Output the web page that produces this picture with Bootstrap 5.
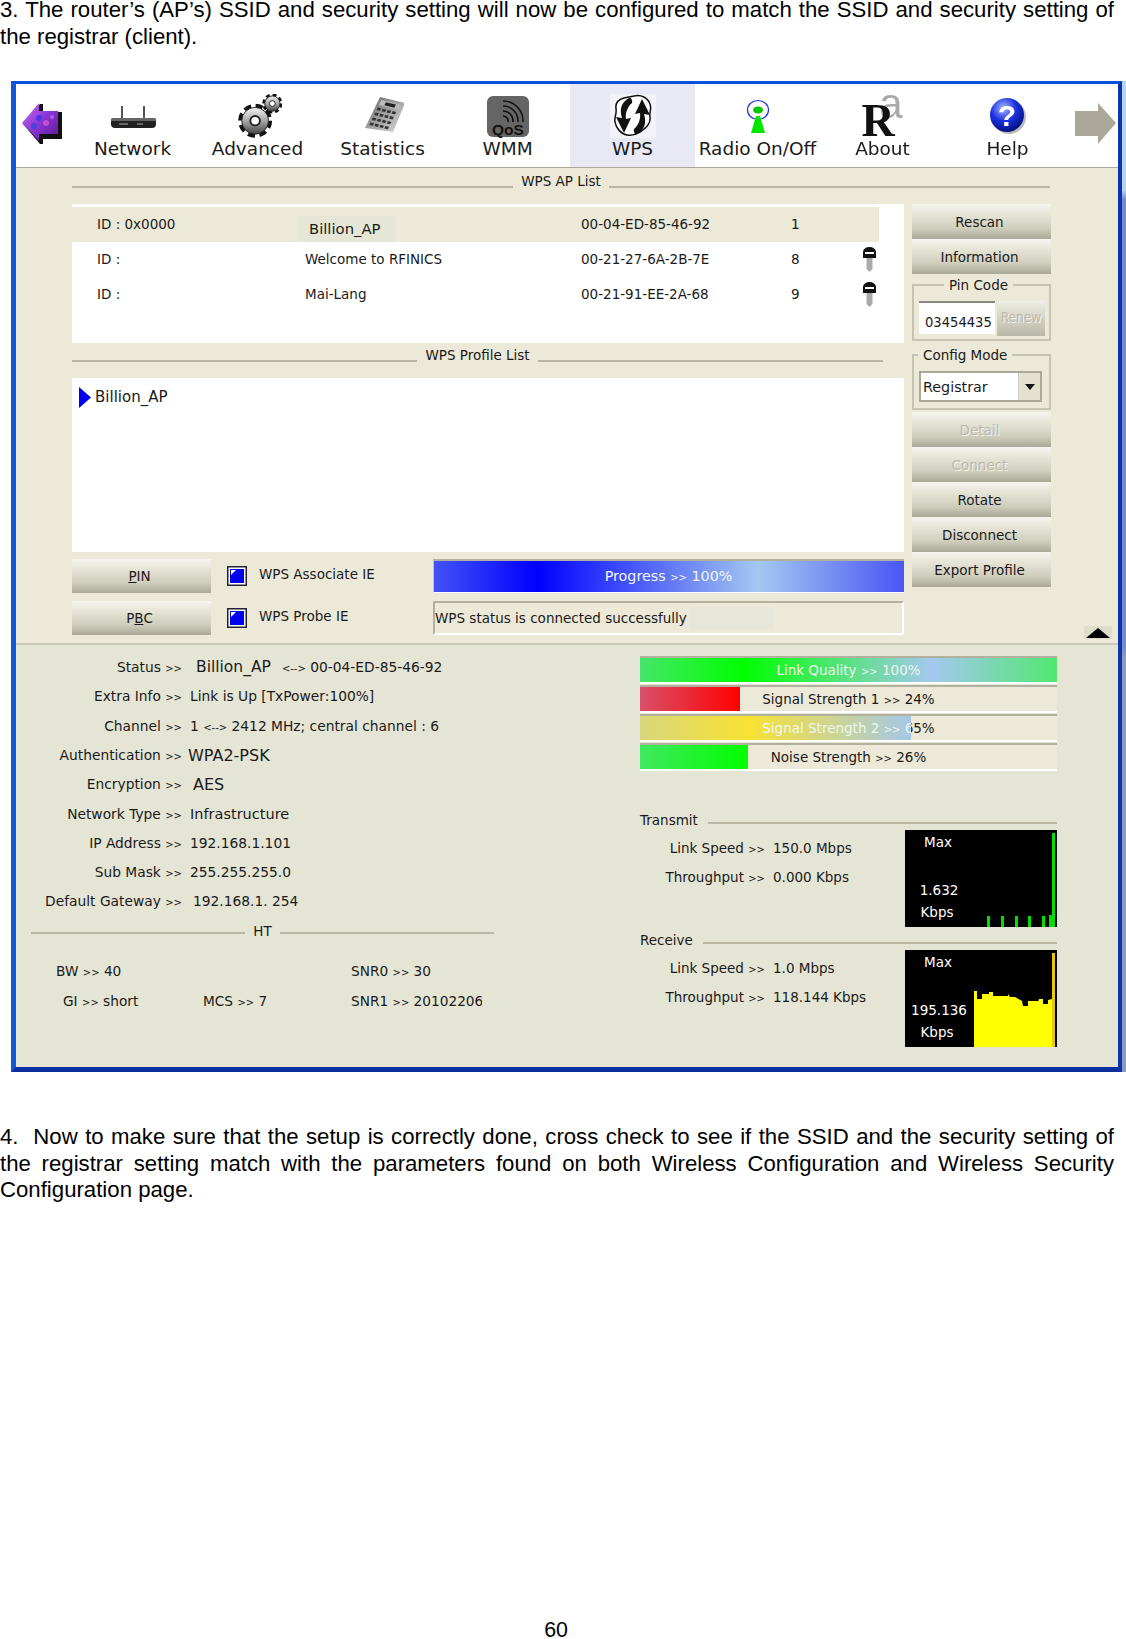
<!DOCTYPE html>
<html lang="en">
<head>
  <meta charset="UTF-8" />
  <meta name="viewport" content="width=device-width, initial-scale=1.0" />
  <title>WPS manual page 60</title>
  <link rel="stylesheet" href="https://cdn.jsdelivr.net/npm/bootstrap@5.3.3/dist/css/bootstrap.min.css">
  <style>
    body {
      height: 1639px;
      overflow: hidden;
      background: #fff;
      color: #111;
      font-family: "Liberation Sans", Arial, sans-serif;
    }
    .doc-text {
      width: 1114px;
      margin: 0;
      font-size: 22.2px;
      line-height: 26.6px;
      text-align: justify;
      color: #000;
    }
    .doc-top { margin-top: -3px; }
    .shot-wrap { margin: 31px 0 52px 11px; }
    .shot-strip {
      width: 4px;
      background: linear-gradient(to bottom, #bcd0f0 0, #bcd0f0 11%, #7888c8 12%, #7888c8 57%, #8f9ab5 58%, #8f9ab5 100%);
    }
    .shot {
      width: 1111px;
      border-style: solid;
      border-color: #0a50d8 #0a35b0 #0a30a0 #1058d8;
      border-width: 3px 4px 5px 5px;
      font: 13.5px/20px "DejaVu Sans", sans-serif;
      color: #1a1a1a;
      filter: blur(.35px);
    }
    .tb { height: 84px; background: #fff; border-bottom: 1px solid #aca899; }
    .tb-back { width: 54px; padding: 19px 0 0 6px; }
    .tb-next { width: 47px; padding: 19px 0 0 5px; }
    .tb-item { width: 125px; padding-top: 10px; text-align: center; font-size: 18.5px; }
    .tb-item svg { display: block; height: 44px; margin: 0 auto 1px; }
    .tb-item svg.ico-about { height: 64px; margin-top: -12px; margin-bottom: -7px; overflow: visible; }
    .tb-on { background: #e9e9f5; }

    .wps { background: #ece9d8; padding-left: 56px; padding-bottom: 8px; border-bottom: 2px solid #c9c7b6; }
    .sec-head { height: 36px; padding-top: 3px; width: 978px; }
    .sec-head2 { height: 35px; padding-top: 2px; }
    .sec-line { flex: 1; height: 2px; margin-top: 15px; background: #b9b6a3; }
    .sec-name { padding: 0 8px; white-space: nowrap; }
    .line-short { margin-right: 21px; }
    .wps-main { width: 832px; }
    .wps-side { width: 139px; margin-left: 8px; }
    .wps-corner { width: 67px; padding-left: 33px; }
    .wps-corner svg { margin-bottom: -4px; }
    .ap-box { height: 139px; background: #fff; padding-top: 3px; }
    table.ap-tbl { width: 807px; table-layout: fixed; margin: 0; --bs-table-bg: transparent; }
    table.ap-tbl td { height: 35px; padding: 0 0 2px; vertical-align: middle; color: #1a1a1a; background: transparent; }
    table.ap-tbl tr.ap-sel td { background: #ece9d8; }
    table.ap-tbl td:first-child { padding-left: 25px; }
    table.ap-tbl td.key-cell, table.ap-tbl td.ssid-cell { padding-bottom: 0; vertical-align: top; }
    .ssid-on { display: block; width: 97px; height: 26px; margin: 9px 0 0 -7px; padding: 3px 0 0 11px; background: #e6e6d6; font-size: 14.8px; white-space: nowrap; }
    .key-ico { display: block; margin-top: 5px; }
    .prof-box { height: 174px; background: #fff; padding: 9px 0 0 7px; font-size: 15px; }
    .wps-row { height: 34px; margin-top: 7px; }
    .wps-row + .wps-row { margin-top: 8px; }
    .flag { width: 222px; padding-left: 16px; }
    .flag span { padding: 0 0 4px 12px; }

    .xp-btn {
      --bs-btn-padding-x: 0;
      --bs-btn-padding-y: 0;
      --bs-btn-font-size: 13.5px;
      --bs-btn-line-height: 1;
      --bs-btn-color: #1a1a1a;
      --bs-btn-hover-color: #1a1a1a;
      --bs-btn-border-width: 0;
      --bs-btn-border-radius: 0;
      display: block;
      width: 139px;
      height: 35px;
      padding: 2px 4px 0 0;
      font-family: "DejaVu Sans", sans-serif;
      background: linear-gradient(to bottom, #f6f5ee 0, #e6e4d6 30%, #cfcdbc 70%, #a9a795 100%);
    }
    .xp-btn.off, .renew-btn { color: #b9b8aa; text-shadow: 1px 1px 0 #f4f3ea; opacity: 1; }
    .btn-h34 { height: 34px; }

    .grp { position: relative; border: 2px solid #c5c3b1; }
    .grp-title { position: absolute; top: -11px; background: #ece9d8; padding: 0 5px; white-space: nowrap; }
    .grp-pin { height: 57px; margin-top: 10px; padding: 15px 3px 0 5px; }
    .grp-cfg { height: 56px; margin-top: 13px; margin-bottom: 2px; padding: 15px 7px 0 5px; }
    .pin-title { left: 30px; }
    .cfg-title { left: 4px; }
    .pin-in {
      width: 76px;
      height: 33px;
      padding: 9px 0 0 6px;
      background: #fff;
      border-top: 2px solid #8b8a7c;
      font-family: "DejaVu Sans Condensed", "DejaVu Sans", sans-serif;
      font-size: 14.6px;
    }
    .renew-btn {
      width: 48px;
      height: 35px;
      margin-left: 2px;
      padding-top: 6px;
      text-align: center;
      font-family: "DejaVu Sans Condensed", "DejaVu Sans", sans-serif;
      background: linear-gradient(to bottom, #efeee4, #b9b7a6);
    }
    .cfg-sel {
      height: 31px;
      padding-left: 2px;
      background: #fff;
      border: 2px solid #aca899;
    }
    .cfg-sel span { padding-top: 4px; font-size: 14.3px; }
    .cfg-arrow { width: 22px; background: #e4e1d0; border-left: 1px solid #ccc; }

    .bar-prog { height: 34px; border-radius: 0; background: #ece9d8; border-top: 2px solid #b3b09e; border-bottom: 1px solid #fff; border-left: 1px solid #c5c3b1; font-size: 14.3px; }
    .bar-stat {
      height: 34px;
      border-top: 2px solid #b3b09e;
      border-left: 2px solid #b3b09e;
      border-bottom: 2px solid #fff;
      border-right: 2px solid #fff;
      white-space: nowrap;
    }
    .stat-patch { width: 84px; height: 22px; margin-left: 2px; background: #e6e6d9; }

    .m-bar { position: relative; height: 28px; border-radius: 0; background: #ece9d8; border-top: 2px solid #b3b09e; border-bottom: 2px solid #fff; font-size: 13.5px; }
    .m-bar + .m-bar { margin-top: 1px; }
    .m-txt { position: absolute; inset: 0; text-align: center; line-height: 24px; color: #1a1a1a; }
    .m-fill { position: relative; overflow: hidden; display: block; height: 100%; }
    .m-fill .m-txt { color: #eef6ee; width: var(--bar-w); right: auto; }
    .m-bar { --bar-w: 417px; }
    .bar-prog { --bar-w: 469px; }
    .bar-prog .m-txt { line-height: 30px; }
    .fill-blue { background: linear-gradient(to right, #4352f6 0, #0000ff 22%, #a4c8f0 69%, #4a55f5 100%); }
    .fill-lq { background: linear-gradient(to right, #46e56a 0, #00ff00 25%, #a4c8f0 70%, #50e870 100%); }
    .fill-red { background: linear-gradient(to right, #d8506a 0, #ff0000 100%); }
    .fill-yel { background: linear-gradient(to right, #d8d67c 0, #f9e233 40%, #a4c8e8 100%); }
    .fill-grn { background: linear-gradient(to right, #40e860 0, #00ff00 100%); }

    .stat { background: #e5e5d5; height: 422px; padding-top: 8px; }
    .st-left { width: 624px; }
    .st-row { height: 29.27px; line-height: 29px; white-space: nowrap; }
    .st-lab { width: 166px; text-align: right; font-size: 13.8px; }
    .st-val { margin-left: 8px; font-size: 13.8px; }
    .gg { font-size: 10px; }
    .off-6 { margin-left: 14px; }
    .off-3 { margin-left: 11px; }
    .off-m { margin-left: 6px; }
    .val-big { font-size: 16px; }
    .val-wide { font-size: 14.5px; }
    .val-ssid { font-size: 15.5px; padding-right: 11px; }
    .ht-head { width: 463px; margin: 4px 0 16px 15px; }
    .ht-head .sec-line { margin-top: 11px; }
    .ht-grid { display: grid; grid-template-columns: 172px 148px 131px; margin-left: 15px; white-space: nowrap; line-height: 29px; font-size: 13.7px; }
    .ht-bw { padding-left: 25px; }
    .ht-gi { padding-left: 32px; }
    .ht-clip { overflow: hidden; }
    .st-right { width: 417px; padding-top: 3px; }
    .rate-head { height: 20px; }
    .rate-head .sec-line { margin-top: 12px; margin-left: 10px; }
    .rate-first { margin-top: 39px; }
    .rate-next { margin-top: 3px; }
    .rate-txt { width: 265px; padding-top: 4px; }
    .rate-lab { width: 125px; text-align: right; }
    .rate-row { height: 29px; line-height: 29px; white-space: nowrap; }
    .graph { display: block; width: 152px; height: 97px; }
    .graph text { font: 13.5px "DejaVu Sans", sans-serif; fill: #fff; text-anchor: middle; }
    .page-no { font-size: 21.33px; line-height: 18px; text-align: center; width: 1112px; margin-top: auto; color: #000; }
  </style>
</head>
<body class="d-flex flex-column">

  <p class="doc-text doc-top">3. The router’s (AP’s) SSID and security setting will now be configured to match the SSID and security setting of the registrar (client).</p>

  <div class="shot-wrap d-flex">
    <div class="shot">

      <div class="tb d-flex">
        <div class="tb-back">
          <svg width="40" height="41" viewBox="0 0 40 41">
            <defs><linearGradient id="pur" x1="0" y1="0" x2="1" y2="1"><stop offset="0" stop-color="#d070f0"/><stop offset=".5" stop-color="#8a35d8"/><stop offset="1" stop-color="#5a1a90"/></linearGradient></defs>
            <polygon points="1,21 18,1 21,1 21,9 40,9 40,36 21,36 21,41 18,41" fill="#111"/>
            <polygon points="0,20 17,0 17,8 36,8 36,31 17,31 17,38" fill="url(#pur)"/>
            <circle cx="17" cy="15" r="3" fill="#4a3ae0"/><circle cx="24" cy="20" r="3" fill="#c050d0"/><circle cx="12" cy="23" r="3" fill="#5040d8"/><circle cx="30" cy="14" r="2" fill="#b060e8"/>
          </svg>
        </div>
        <div class="tb-item">
          <svg width="50" viewBox="0 0 50 44">
            <path d="M14 12v13M36 12v13" stroke="#555" stroke-width="2"/>
            <rect x="3" y="24" width="45" height="10" rx="4" fill="#222"/>
            <rect x="3" y="24" width="45" height="3" rx="1.5" fill="#666"/>
            <path d="M11 30h9M29 30h6" stroke="#aaa" stroke-width="1.2"/>
          </svg>
          Network
        </div>
        <div class="tb-item">
          <svg width="48" viewBox="-3 0 48 46">
            <defs><linearGradient id="steel" x1="0" y1="0" x2="0" y2="1"><stop offset="0" stop-color="#f2f2f2"/><stop offset=".5" stop-color="#a8a8a8"/><stop offset="1" stop-color="#444"/></linearGradient></defs>
            <circle cx="36" cy="10" r="8" fill="none" stroke="#111" stroke-width="5" stroke-dasharray="3.6 2.68"/>
            <circle cx="36" cy="10" r="8" fill="url(#steel)" stroke="#222" stroke-width="1"/>
            <circle cx="36" cy="10" r="3" fill="#fff" stroke="#222"/>
            <circle cx="18" cy="28" r="14.5" fill="none" stroke="#111" stroke-width="6.5" stroke-dasharray="7 4.39"/>
            <circle cx="18" cy="28" r="14" fill="url(#steel)" stroke="#222" stroke-width="1"/>
            <circle cx="18" cy="28" r="5" fill="#fff" stroke="#222" stroke-width="2"/>
          </svg>
          Advanced
        </div>
        <div class="tb-item">
          <svg width="42" viewBox="-3 0 42 44">
            <defs><linearGradient id="calc" x1="0" y1="0" x2="1" y2="1"><stop offset="0" stop-color="#666"/><stop offset="1" stop-color="#ddd"/></linearGradient></defs>
            <polygon points="15,3 40,9 28,38 0,34" fill="url(#calc)"/>
            <g transform="matrix(2.5 .6 -1.5 3.1 15 3)" fill="#333">
              <rect x="1" y=".8" width="8" height="1.6" fill="#bbb"/>
              <rect x="3" y="1.1" width="4" height="1" fill="#222"/>
              <rect x="1" y="3.2" width="1.4" height=".8"/><rect x="3" y="3.2" width="1.4" height=".8"/><rect x="5" y="3.2" width="1.4" height=".8"/><rect x="7" y="3.2" width="1.4" height=".8"/>
              <rect x="1" y="4.8" width="1.4" height=".8"/><rect x="3" y="4.8" width="1.4" height=".8"/><rect x="5" y="4.8" width="1.4" height=".8"/><rect x="7" y="4.8" width="1.4" height=".8"/>
              <rect x="1" y="6.4" width="1.4" height=".8"/><rect x="3" y="6.4" width="1.4" height=".8"/><rect x="5" y="6.4" width="1.4" height=".8"/><rect x="7" y="6.4" width="1.4" height=".8"/>
              <rect x="1" y="8" width="1.4" height=".8"/><rect x="3" y="8" width="1.4" height=".8"/><rect x="5" y="8" width="1.4" height=".8"/><rect x="7" y="8" width="1.4" height=".8"/>
            </g>
          </svg>
          Statistics
        </div>
        <div class="tb-item">
          <svg width="42" viewBox="0 0 42 44">
            <rect x="0" y="2" width="42" height="41" rx="6" fill="#656565"/>
            <g fill="none" stroke="#111" stroke-width="1.6">
              <path d="M16 22a5 5 0 0 1 5 6"/><path d="M16 17a10 10 0 0 1 10 11"/><path d="M16 12a15 15 0 0 1 15 16"/><path d="M16 7a20 20 0 0 1 20 21"/>
            </g>
            <text x="21" y="41" text-anchor="middle" font-family="Liberation Sans, sans-serif" font-weight="700" font-size="15.5" fill="#111">QoS</text>
          </svg>
          WMM
        </div>
        <div class="tb-item tb-on">
          <svg width="46" viewBox="0 0 46 44">
            <rect x="0" y="0" width="46" height="44" fill="#f2f2f8"/>
            <path d="M24 2c7-2 14 2 16 8 2 5-1 8 0 13 1 7-5 12-10 15-5 3-8 4-13 3-6-1-11-7-12-13-1-5 2-8 1-13C5 8 10 5 14 4c4-1 6-1 10-2z" fill="#fff" stroke="#111" stroke-width="1.5"/>
            <path d="M19 4C12 8 9 14 12 24l-6-1 8 16 7-15-5 1c-1-6 2-13 6-16 1-2-1-6-3-5z" fill="#111"/>
            <path d="M27 40c7-4 10-10 7-20l6 1-8-16-7 15 5-1c1 6-2 13-6 16-1 2 1 6 3 5z" fill="#111"/>
          </svg>
          WPS
        </div>
        <div class="tb-item">
          <svg width="24" viewBox="0 0 24 44">
            <ellipse cx="12" cy="16" rx="10.5" ry="9.5" fill="#fff" stroke="#2030e0" stroke-width="1.2"/>
            <ellipse cx="12" cy="16" rx="5" ry="3.5" fill="#00c800"/>
            <polygon points="10,22 14,22 19,39 5,39" fill="#00e800"/>
          </svg>
          Radio On/Off
        </div>
        <div class="tb-item">
          <svg class="ico-about" width="44" viewBox="0 -12 44 64">
            <text x="30" y="24" text-anchor="middle" font-family="Liberation Sans, sans-serif" font-size="42" fill="#aaa">a</text>
            <text x="17" y="42" text-anchor="middle" font-family="Liberation Serif, serif" font-weight="700" font-size="46" fill="#111">R</text>
          </svg>
          About
        </div>
        <div class="tb-item">
          <svg width="38" viewBox="0 0 38 44">
            <defs><radialGradient id="orb" cx=".4" cy=".3" r=".75"><stop offset="0" stop-color="#a8b8ff"/><stop offset=".5" stop-color="#1a30e0"/><stop offset="1" stop-color="#001070"/></radialGradient></defs>
            <circle cx="20" cy="23" r="17" fill="#bbb"/>
            <circle cx="18" cy="21" r="17" fill="url(#orb)"/>
            <text x="18" y="32" text-anchor="middle" font-family="Liberation Sans, sans-serif" font-weight="700" font-size="30" fill="#fff">?</text>
          </svg>
          Help
        </div>
        <div class="tb-next">
          <svg width="41" height="41" viewBox="0 0 41 41"><polygon points="0,8 23,8 23,0 41,20 23,41 23,33 0,33" fill="#aca899"/></svg>
        </div>
      </div>

      <div class="wps">
        <div class="sec-head d-flex">
          <div class="sec-line"></div><div class="sec-name">WPS AP List</div><div class="sec-line"></div>
        </div>
        <div class="d-flex">
          <div class="wps-main">
            <div class="ap-box">
              <table class="table table-borderless ap-tbl">
                <colgroup><col width="233"><col width="276"><col width="210"><col width="71"><col width="17"></colgroup>
                <tr class="ap-sel"><td>ID : 0x0000</td><td class="ssid-cell"><span class="ssid-on">Billion_AP</span></td><td>00-04-ED-85-46-92</td><td>1</td><td></td></tr>
                <tr><td>ID :</td><td>Welcome to RFINICS</td><td>00-21-27-6A-2B-7E</td><td>8</td><td class="key-cell">
                  <svg class="key-ico" width="15" height="25" viewBox="0 0 15 25"><path d="M4.5 11h6v11l-3 3-3-3z" fill="#aaa"/><path d="M1 11V5a6.5 5 0 0 1 13 0v6z" fill="#111"/><rect x="3" y="5" width="9" height="2" fill="#fff"/></svg>
                </td></tr>
                <tr><td>ID :</td><td>Mai-Lang</td><td>00-21-91-EE-2A-68</td><td>9</td><td class="key-cell">
                  <svg class="key-ico" width="15" height="25" viewBox="0 0 15 25"><path d="M4.5 11h6v11l-3 3-3-3z" fill="#aaa"/><path d="M1 11V5a6.5 5 0 0 1 13 0v6z" fill="#111"/><rect x="3" y="5" width="9" height="2" fill="#fff"/></svg>
                </td></tr>
              </table>
            </div>
            <div class="sec-head2 d-flex">
              <div class="sec-line"></div><div class="sec-name">WPS Profile List</div><div class="sec-line line-short"></div>
            </div>
            <div class="prof-box d-flex align-items-center">
              <svg class="mb-auto" width="12" height="21" viewBox="0 0 12 21"><polygon points="0,0 12,10.5 0,21" fill="#0000f0"/></svg>
              <span class="mb-auto ms-1">Billion_AP</span>
            </div>
            <div class="wps-row d-flex">
              <button class="btn xp-btn btn-h34" type="button"><u>P</u>IN</button>
              <div class="flag d-flex align-items-center">
                <svg width="20" height="20" viewBox="0 0 20 20"><rect x=".75" y=".75" width="18.5" height="18.5" fill="#fff" stroke="#223" stroke-width="1.5"/><rect x="3" y="3" width="14" height="14" fill="#0000f0"/><path d="M4 9V4h5z" fill="#fff"/></svg>
                <span>WPS Associate IE</span>
              </div>
              <div class="progress bar-prog flex-grow-1 position-relative">
                <div class="m-txt">Progress <span class="gg">&gt;&gt;</span> 100%</div>
                <div class="progress-bar m-fill fill-blue" style="width:100%"><div class="m-txt">Progress <span class="gg">&gt;&gt;</span> 100%</div></div>
              </div>
            </div>
            <div class="wps-row d-flex">
              <button class="btn xp-btn btn-h34" type="button">P<u>B</u>C</button>
              <div class="flag d-flex align-items-center">
                <svg width="20" height="20" viewBox="0 0 20 20"><rect x=".75" y=".75" width="18.5" height="18.5" fill="#fff" stroke="#223" stroke-width="1.5"/><rect x="3" y="3" width="14" height="14" fill="#0000f0"/><path d="M4 9V4h5z" fill="#fff"/></svg>
                <span>WPS Probe IE</span>
              </div>
              <div class="bar-stat flex-grow-1 d-flex align-items-center">WPS status is connected successfully<div class="stat-patch"></div></div>
            </div>
          </div>

          <div class="wps-side">
            <button class="btn xp-btn mt-0" type="button">Rescan</button>
            <button class="btn xp-btn" type="button">Information</button>
            <div class="grp grp-pin d-flex">
              <div class="grp-title pin-title">Pin Code</div>
              <div class="pin-in">03454435</div>
              <div class="renew-btn">Renew</div>
            </div>
            <div class="grp grp-cfg">
              <div class="grp-title cfg-title">Config Mode</div>
              <div class="cfg-sel d-flex justify-content-between">
                <span>Registrar</span>
                <div class="cfg-arrow d-flex align-items-center justify-content-center">
                  <svg width="10" height="6" viewBox="0 0 10 6"><polygon points="0,0 10,0 5,6" fill="#111"/></svg>
                </div>
              </div>
            </div>
            <button class="btn xp-btn off" type="button">Detail</button>
            <button class="btn xp-btn off" type="button">Connect</button>
            <button class="btn xp-btn" type="button">Rotate</button>
            <button class="btn xp-btn" type="button">Disconnect</button>
            <button class="btn xp-btn" type="button">Export Profile</button>
          </div>

          <div class="wps-corner d-flex align-items-end">
            <svg width="28" height="13" viewBox="0 0 28 13"><rect width="28" height="13" fill="#dedccb"/><polygon points="2,12 14,2 26,12" fill="#000"/></svg>
          </div>
        </div>
      </div>

      <div class="stat d-flex">
        <div class="st-left">
          <div class="st-row d-flex"><span class="st-lab">Status <span class="gg">&gt;&gt;</span></span><span class="st-val off-6"><span class="val-ssid">Billion_AP</span><span class="gg">&lt;--&gt;</span> 00-04-ED-85-46-92</span></div>
          <div class="st-row d-flex"><span class="st-lab">Extra Info <span class="gg">&gt;&gt;</span></span><span class="st-val">Link is Up [TxPower:100%]</span></div>
          <div class="st-row d-flex"><span class="st-lab">Channel <span class="gg">&gt;&gt;</span></span><span class="st-val">1 <span class="gg">&lt;--&gt;</span> 2412 MHz; central channel : 6</span></div>
          <div class="st-row d-flex"><span class="st-lab">Authentication <span class="gg">&gt;&gt;</span></span><span class="st-val off-m val-big">WPA2-PSK</span></div>
          <div class="st-row d-flex"><span class="st-lab">Encryption <span class="gg">&gt;&gt;</span></span><span class="st-val off-3 val-big">AES</span></div>
          <div class="st-row d-flex"><span class="st-lab">Network Type <span class="gg">&gt;&gt;</span></span><span class="st-val val-wide">Infrastructure</span></div>
          <div class="st-row d-flex"><span class="st-lab">IP Address <span class="gg">&gt;&gt;</span></span><span class="st-val">192.168.1.101</span></div>
          <div class="st-row d-flex"><span class="st-lab">Sub Mask <span class="gg">&gt;&gt;</span></span><span class="st-val">255.255.255.0</span></div>
          <div class="st-row d-flex"><span class="st-lab">Default Gateway <span class="gg">&gt;&gt;</span></span><span class="st-val off-3">192.168.1. 254</span></div>
          <div class="ht-head d-flex">
            <div class="sec-line"></div><div class="sec-name">HT</div><div class="sec-line"></div>
          </div>
          <div class="ht-grid">
            <div class="ht-bw">BW <span class="gg">&gt;&gt;</span> 40</div><div></div><div class="ht-clip">SNR0 <span class="gg">&gt;&gt;</span> 30</div>
            <div class="ht-gi">GI <span class="gg">&gt;&gt;</span> short</div><div>MCS <span class="gg">&gt;&gt;</span> 7</div><div class="ht-clip">SNR1 <span class="gg">&gt;&gt;</span> 20102206375</div>
          </div>
        </div>

        <div class="st-right">
          <div class="progress m-bar">
            <div class="m-txt">Link Quality <span class="gg">&gt;&gt;</span> 100%</div>
            <div class="progress-bar m-fill fill-lq" style="width:100%"><div class="m-txt">Link Quality <span class="gg">&gt;&gt;</span> 100%</div></div>
          </div>
          <div class="progress m-bar">
            <div class="m-txt">Signal Strength 1 <span class="gg">&gt;&gt;</span> 24%</div>
            <div class="progress-bar m-fill fill-red" style="width:24%"></div>
          </div>
          <div class="progress m-bar">
            <div class="m-txt">Signal Strength 2 <span class="gg">&gt;&gt;</span> 65%</div>
            <div class="progress-bar m-fill fill-yel" style="width:65%"><div class="m-txt">Signal Strength 2 <span class="gg">&gt;&gt;</span> 65%</div></div>
          </div>
          <div class="progress m-bar">
            <div class="m-txt">Noise Strength <span class="gg">&gt;&gt;</span> 26%</div>
            <div class="progress-bar m-fill fill-grn" style="width:26%"></div>
          </div>

          <div class="rate-head rate-first d-flex"><div>Transmit</div><div class="sec-line"></div></div>
          <div class="d-flex">
            <div class="rate-txt">
              <div class="rate-row d-flex"><span class="rate-lab">Link Speed <span class="gg">&gt;&gt;</span></span><span class="ms-2">150.0 Mbps</span></div>
              <div class="rate-row d-flex"><span class="rate-lab">Throughput <span class="gg">&gt;&gt;</span></span><span class="ms-2">0.000 Kbps</span></div>
            </div>
            <svg class="graph" viewBox="0 0 152 97">
              <rect width="152" height="97" fill="#000"/>
              <path d="M82 86h3v11h-3zM96 86h3v11h-3zM110 86h3v11h-3zM123 86h3v11h-3zM137 86h3v11h-3zM144 85h3v12h-3zM147 3h3v94h-3z" fill="#00e000"/>
              <text x="33" y="17">Max</text>
              <text x="34" y="65">1.632</text>
              <text x="32" y="87">Kbps</text>
            </svg>
          </div>

          <div class="rate-head rate-next d-flex"><div>Receive</div><div class="sec-line"></div></div>
          <div class="d-flex">
            <div class="rate-txt">
              <div class="rate-row d-flex"><span class="rate-lab">Link Speed <span class="gg">&gt;&gt;</span></span><span class="ms-2">1.0 Mbps</span></div>
              <div class="rate-row d-flex"><span class="rate-lab">Throughput <span class="gg">&gt;&gt;</span></span><span class="ms-2">118.144 Kbps</span></div>
            </div>
            <svg class="graph" viewBox="0 0 152 97">
              <rect width="152" height="97" fill="#000"/>
              <polygon points="69,97 69,41 72,41 72,49 77,49 77,44 84,44 84,42 88,42 88,46 103,46 103,44 103,44 105,47 110,47 117,51 118,56 123,56 123,51 133,51 133,52 134,49 138,49 138,54 143,54 143,50 147,49 147,3 150,3 150,97" fill="#ffff00"/>
              <rect x="147" y="3" width="3" height="94" fill="#e8c800"/>
              <text x="33" y="17">Max</text>
              <text x="34" y="65">195.136</text>
              <text x="32" y="87">Kbps</text>
            </svg>
          </div>
        </div>
      </div>
    </div>
    <div class="shot-strip"></div>
  </div>

  <p class="doc-text">4.&nbsp;&nbsp;Now to make sure that the setup is correctly done, cross check to see if the SSID and the security setting of the registrar setting match with the parameters found on both Wireless Configuration and Wireless Security Configuration page.</p>

  <div class="page-no">60</div>

  <script src="https://cdn.jsdelivr.net/npm/bootstrap@5.3.3/dist/js/bootstrap.bundle.min.js"></script>
</body>
</html>
